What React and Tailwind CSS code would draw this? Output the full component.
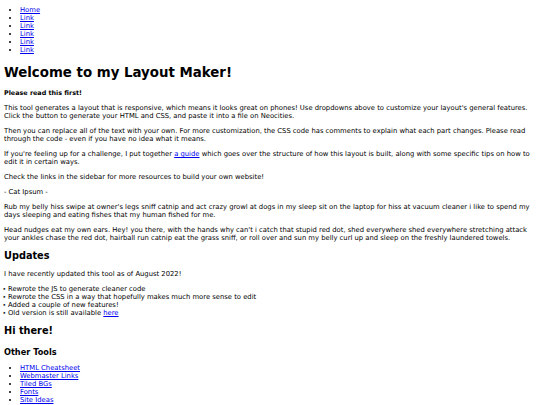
import React from "react";

const A = ({ children }) => (
  <a href="#" className="text-[#0000ee] underline">{children}</a>
);

const Dot = () => (
  <span className="absolute left-[-5.5px] top-0 text-[6px]">•</span>
);

export default function App() {
  return (
    <div className="min-h-[405px] bg-white text-black font-['DejaVu_Sans',Verdana,sans-serif] text-[6.8px] leading-[8px] px-[4px] pt-[6px]">
      <ul className="list-disc pl-[16px]">
        <li><A>Home</A></li>
        <li><A>Link</A></li>
        <li><A>Link</A></li>
        <li><A>Link</A></li>
        <li><A>Link</A></li>
        <li><A>Link</A></li>
      </ul>

      <h1 className="mt-[11px] text-[13.35px] leading-[16px] font-bold">Welcome to my Layout Maker!</h1>

      <h5 className="mt-[9px] text-[6.4px] leading-[7px] font-bold">Please read this first!</h5>

      <p className="mt-[7px]">This tool generates a layout that is responsive, which means it looks great on phones! Use dropdowns above to customize your layout's general features.<br />Click the button to generate your HTML and CSS, and paste it into a file on Neocities.</p>
      <p className="mt-[7px]">Then you can replace all of the text with your own. For more customization, the CSS code has comments to explain what each part changes. Please read<br />through the code - even if you have no idea what it means.</p>
      <p className="mt-[7px]">If you're feeling up for a challenge, I put together <A>a guide</A> which goes over the structure of how this layout is built, along with some specific tips on how to<br />edit it in certain ways.</p>
      <p className="mt-[7px]">Check the links in the sidebar for more resources to build your own website!</p>
      <p className="mt-[7px]">- Cat Ipsum -</p>
      <p className="mt-[7px]">Rub my belly hiss swipe at owner's legs sniff catnip and act crazy growl at dogs in my sleep sit on the laptop for hiss at vacuum cleaner i like to spend my<br />days sleeping and eating fishes that my human fished for me.</p>
      <p className="mt-[7px]">Head nudges eat my own ears. Hey! you there, with the hands why can't i catch that stupid red dot, shed everywhere shed everywhere stretching attack<br />your ankles chase the red dot, hairball run catnip eat the grass sniff, or roll over and sun my belly curl up and sleep on the freshly laundered towels.</p>

      <h2 className="mt-[8px] text-[9.75px] leading-[12px] font-bold">Updates</h2>
      <p className="mt-[8px]">I have recently updated this tool as of August 2022!</p>
      <ul className="mt-[7px] pl-[4px]">
        <li className="relative"><Dot />Rewrote the JS to generate cleaner code</li>
        <li className="relative"><Dot />Rewrote the CSS in a way that hopefully makes much more sense to edit</li>
        <li className="relative"><Dot />Added a couple of new features!</li>
        <li className="relative"><Dot />Old version is still available <A>here</A></li>
      </ul>

      <h2 className="mt-[8px] text-[9.75px] leading-[12px] font-bold">Hi there!</h2>
      <h3 className="mt-[10px] text-[8.2px] leading-[10px] font-bold">Other Tools</h3>
      <ul className="mt-[7px] list-disc pl-[16px]">
        <li><A>HTML Cheatsheet</A></li>
        <li><A>Webmaster Links</A></li>
        <li><A>Tiled BGs</A></li>
        <li><A>Fonts</A></li>
        <li><A>Site Ideas</A></li>
      </ul>
    </div>
  );
}
